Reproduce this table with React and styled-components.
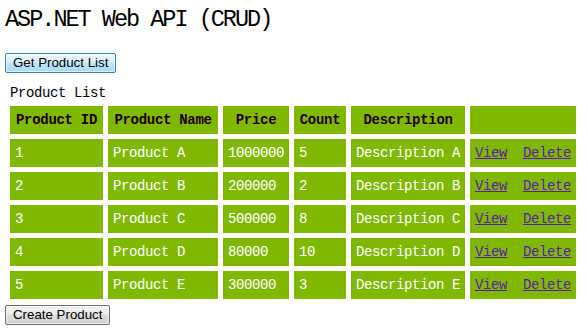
import React from 'react';
import styled, { createGlobalStyle } from 'styled-components';

const GlobalStyle = createGlobalStyle`
  body {
    margin: 0;
    background: #ffffff;
    font-family: "Liberation Mono", "DejaVu Sans Mono", monospace;
    color: #000000;
  }
`;

const Page = styled.div`
  padding: 5px 5px 0 5px;
`;

const Title = styled.h1`
  margin: 0;
  height: 28px;
  font-family: "Liberation Mono", monospace;
  font-weight: normal;
  font-size: 23.5px;
  letter-spacing: -2px;
  line-height: 30px;
  color: #000000;
`;

const Button = styled.button`
  display: block;
  box-sizing: border-box;
  height: 20px;
  padding: 0 7px;
  margin: ${p => p.$top || 0}px 0 0 0;
  font-family: "Liberation Sans", Arial, sans-serif;
  font-size: 13.3px;
  line-height: 16px;
  color: #000000;
  border: 1px solid ${p => (p.$focused ? '#3c7fb1' : '#707070')};
  border-radius: 2px;
  background: ${p =>
    p.$focused
      ? 'linear-gradient(#eaf6fd 0%, #d9f0fc 45%, #bee6fd 50%, #a7d9f5 100%)'
      : 'linear-gradient(#f2f2f2 0%, #ebebeb 45%, #dddddd 50%, #cfcfcf 100%)'};
  box-shadow: inset 0 0 0 1px rgba(255, 255, 255, 0.6);
`;

const Table = styled.table`
  border-collapse: separate;
  border-spacing: 5px;
  margin-top: 12px;
  table-layout: fixed;
`;

const Caption = styled.caption`
  text-align: left;
  padding-left: 5px;
  height: 16px;
  line-height: 16px;
  font-size: 14px;
  letter-spacing: -0.4px;
`;

const HeadCell = styled.th`
  box-sizing: border-box;
  width: ${p => p.$w}px;
  height: 28px;
  padding: 0 3px;
  background: #80b800;
  color: #200000;
  font-size: 14px;
  font-weight: bold;
  letter-spacing: -0.3px;
  text-align: center;
  white-space: nowrap;
`;

const Cell = styled.td`
  box-sizing: border-box;
  height: 28px;
  padding: 0 5px;
  background: #80b800;
  color: #ffffff;
  font-size: 14px;
  letter-spacing: -0.4px;
  white-space: nowrap;
`;

const Link = styled.a`
  color: #5a1ea8;
  text-decoration: underline;
  margin-left: ${p => p.$gap || 0}px;
  cursor: pointer;
`;

const columns = [
  { label: 'Product ID', w: 93 },
  { label: 'Product Name', w: 110 },
  { label: 'Price', w: 66 },
  { label: 'Count', w: 52 },
  { label: 'Description', w: 114 },
  { label: '', w: 106 },
];

const products = [
  { id: 1, name: 'Product A', price: 1000000, count: 5, desc: 'Description A' },
  { id: 2, name: 'Product B', price: 200000, count: 2, desc: 'Description B' },
  { id: 3, name: 'Product C', price: 500000, count: 8, desc: 'Description C' },
  { id: 4, name: 'Product D', price: 80000, count: 10, desc: 'Description D' },
  { id: 5, name: 'Product E', price: 300000, count: 3, desc: 'Description E' },
];

export default function App() {
  return (
    <Page>
      <GlobalStyle />
      <Title>ASP.NET Web API (CRUD)</Title>
      <Button $focused $top={20}>Get Product List</Button>
      <Table>
        <Caption>Product List</Caption>
        <thead>
          <tr>
            {columns.map((c, i) => (
              <HeadCell key={i} $w={c.w}>{c.label}</HeadCell>
            ))}
          </tr>
        </thead>
        <tbody>
          {products.map(p => (
            <tr key={p.id}>
              <Cell>{p.id}</Cell>
              <Cell>{p.name}</Cell>
              <Cell>{p.price}</Cell>
              <Cell>{p.count}</Cell>
              <Cell>{p.desc}</Cell>
              <Cell>
                <Link href="#">View</Link>
                <Link href="#" $gap={16}>Delete</Link>
              </Cell>
            </tr>
          ))}
        </tbody>
      </Table>
      <Button $top={1}>Create Product</Button>
    </Page>
  );
}
